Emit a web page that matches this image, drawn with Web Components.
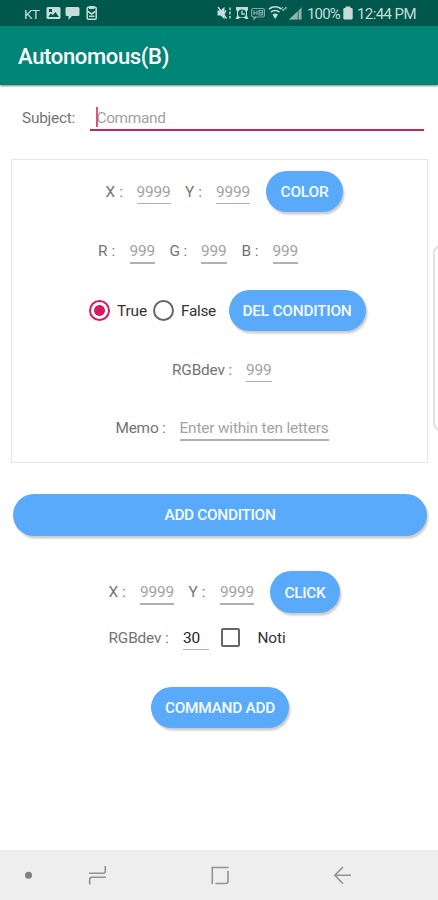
<!DOCTYPE html>
<html lang="en"><head><meta charset="utf-8"><title>Autonomous(B)</title>
<style>
html,body{margin:0;height:100%;background:#fff}
body{font-family:Roboto,"Liberation Sans",sans-serif;width:438px;height:900px;overflow:hidden}
</style></head><body>
<app-screen></app-screen>
<script>
const define = (name, html, ready) => {
  const t = document.createElement('template');
  t.innerHTML = html;
  customElements.define(name, class extends HTMLElement {
    connectedCallback() {
      if (this.shadowRoot) return;
      this.attachShadow({mode: 'open'}).append(t.content.cloneNode(true));
      for (const [a, p] of [['w', 'width'], ['ml', 'margin-left'], ['h', 'height'], ['size', 'font-size'], ['pl', 'padding-left']])
        if (this.hasAttribute(a)) this.style.setProperty(p, this.getAttribute(a) + 'px');
      if (ready) ready(this, this.shadowRoot);
    }
  });
};
// Spaces the letters so that the text fills the requested width.
const track = (span, width) => {
  const n = span.textContent.length, natural = span.getBoundingClientRect().width;
  span.style.letterSpacing = ((width - natural) / n).toFixed(3) + 'px';
};

define('text-label', `<style>
:host{display:block;flex:none;font-size:15.4px;line-height:20px;color:var(--ink,#747474);white-space:nowrap}
span{display:inline-block;white-space:pre}</style><span></span>`, (el, r) => {
  const s = r.querySelector('span'); s.textContent = el.getAttribute('text'); track(s, +el.getAttribute('w'));
});
define('text-field', `<style>
:host{display:flex;flex-direction:column;justify-content:center;position:relative;flex:none;height:100%;--ink:#a2a2a2}
:host([filled]){--ink:#222}
i{position:absolute;left:0;right:0;top:calc(50% + var(--drop,11px));height:var(--rule,1.5px);background:#b0b0b0}
</style><i></i>`, (el, r) => {
  const n = document.createElement('text-label');
  n.setAttribute('text', el.getAttribute('text'));
  n.setAttribute('w', el.getAttribute('tw') || el.getAttribute('w'));
  r.insertBefore(n, r.querySelector('i'));
});
define('form-row', `<style>
:host{display:flex;align-items:center;box-sizing:border-box}
</style><slot></slot>`);
define('pill-button', `<style>
:host{display:flex;align-items:center;justify-content:center;flex:none;height:41.5px;border-radius:21px;background:#59aafa;box-shadow:1.5px 2.5px 2px rgba(0,0,0,.2);--ink:#f7fbff;font-weight:500}
::slotted(*){position:relative;top:.6px}
</style><slot></slot>`);
define('radio-dot', `<style>
:host{display:block;flex:none;box-sizing:border-box;width:21px;height:21px;border:2px solid #666;border-radius:50%}
:host([checked]){border-color:#d81b60;background:radial-gradient(circle,#d81b60 5px,#fff 5.8px)}
</style>`);
define('check-square', `<style>
:host{display:block;flex:none;box-sizing:border-box;width:19px;height:19px;border:2px solid #666;border-radius:2px}
</style>`);
define('status-bar', `<style>
:host{display:flex;align-items:center;height:26px;background:#00574b;box-sizing:border-box;padding-left:24px;--ink:#c5dcd8}
svg{display:block;height:26px;flex:none}text-label{padding-top:2px}
</style>
<text-label size="13.5" w="15" text="KT"></text-label>
<svg width="178" height="26" viewBox="39 0 178 26" fill="#c5dcd8">
<path fill-rule="evenodd" d="M48 7h11q1.500 0 1.500 1.500v9q0 1.500-1.500 1.500H48q-1.500 0-1.500-1.500v-9Q46.500 7 48 7zm.4 10h10.500l-3.500-5-2.700 3.300-1.800-2zM49 9v3h3V9z"/>
<path d="M67 7h11q1.500 0 1.500 1.500v6q0 1.500-1.500 1.500h-6l-3.500 4V16H67q-1.500 0-1.500-1.500v-6Q65.500 7 67 7z"/>
<rect x="87.200" y="7.200" width="9" height="12" rx="1" fill="none" stroke="#c5dcd8" stroke-width="1.500"/><path d="M89 6h5.500v3H89zM88 10.500l3.700 2.500 3.700-2.500v2L91.700 15 88 12.500zM89 15.500h5.500V17H89z"/></svg>
<svg width="90" height="26" viewBox="217 0 90 26" fill="#c5dcd8">
<path d="M217.500 10.500h3l4-3.800v12.600l-4-3.800h-3z"/><path d="M218 7l8.500 11.500M226 10.500l-3 4.500M230 7.500v2.500m0 1.500v3m0 1.500v2.500" stroke="#c5dcd8" stroke-width="1.400"/>
<path fill-rule="evenodd" d="M236 7h12v3l-1 1v5l1.500 3h-3l-1-1h-5l-1 1h-3l1.500-3v-5l-1-1zM242 9.500a4 4 0 100 8 4 4 0 000-8z"/><path d="M242 10.500V14h2.800" stroke="#c5dcd8" stroke-width="1.300" fill="none"/>
<g fill="none" stroke="#82aaa4" stroke-width="1.200"><rect x="251.600" y="8.500" width="12.800" height="8.500" rx="1.500"/><path d="M254 10.500v4.500m0-2.200h3m0-2.300v4.500M259 10.500h3.500v4.300H259zm0 2.200h3.500M254 17v2l2-2"/></g>
<path d="M269 9q6-4.500 12.500 0M271 12q4-3 8.500 0" fill="none" stroke="#c5dcd8" stroke-width="1.700"/><path d="M272.500 14.500q3-2 5.500 0L275.200 19z"/><path d="M281 9l2-2m0 4l3-4m-3 4V8.500m3-1.500v2.500" stroke="#a5c5c0" stroke-width="1"/>
<path d="M289 19.500L302 7v12.500z" fill="#52877f"/><path d="M289 19.500l8.500-8v8zM299 10.500l2-2v11h-2z" fill="#91b3ae"/></svg>
<text-label size="15" w="33" text="100%"></text-label>
<svg width="16" height="26" viewBox="340 0 16 26" fill="#c5dcd8"><path d="M345.500 6.500h5V8h1q1.200 0 1.200 1.200v9q0 1.300-1.200 1.300h-7q-1.200 0-1.200-1.300v-9Q343.300 8 344.500 8h1z"/></svg>
<text-label size="15" w="59" ml="1" text="12:44 PM"></text-label>`);
define('app-bar', `<style>
:host{display:flex;align-items:center;height:59px;box-sizing:border-box;padding:3px 0 0 18px;background:#008577;box-shadow:0 1px 2px rgba(0,0,0,.5);font-weight:500;--ink:#fff}
text-label{line-height:28px}
</style><text-label size="22" w="151" text="Autonomous(B)"></text-label>`);
define('condition-card', `<style>
:host{display:block;box-sizing:border-box;width:417px;height:304px;margin:28px 0 0 11px;border:1.5px solid #e5e5e5;padding-top:2px}
</style><slot></slot>`);
define('edge-handle', `<style>
:host{position:absolute;left:433px;top:245px;width:5px;height:185px}svg{display:block}
</style><svg width="5" height="186" fill="none" stroke="#dcdcdc" stroke-width="1.600"><path d="M5 1L1 6v174l4 5"/></svg>`);
define('nav-bar', `<style>
:host{display:block;height:50px;background:#eee;margin-top:auto}svg{display:block}
</style><svg width="438" height="50" fill="none" stroke="#929292" stroke-width="1.600"><circle cx="28.500" cy="25.200" r="3.500" fill="#808080" stroke="none"/>
<path d="M89 23.200h14q2.300 0 2.300-2.300V16M106 27.200H92q-2.300 0-2.300 2.300v5"/>
<path d="M228.500 17.500h-16.200V34M215.500 33.500h10q2.500 0 2.500-2.500V21"/>
<path d="M335 25.200h16M343 17l-8.200 8.200 8.200 8.600"/></svg>`);
define('cursor-field', `<style>
:host{display:block;position:relative;width:334px;height:66px;margin-left:15px;box-sizing:border-box;--ink:#a2a2a2}
form-row{height:66px}
i{position:absolute;left:6px;top:22px;width:2px;height:20px;background:#dc5580}
b{position:absolute;left:0;width:100%;top:44px;height:2px;background:#c5265f}
</style><form-row><text-label ml="6.500" w="69" text="Command"></text-label></form-row><i></i><b></b>`);
define('app-screen', `<style>
:host{display:flex;flex-direction:column;width:438px;height:900px;position:relative}
.subject{height:46px;padding-top:20px}
.dark{--ink:#333}
.memo{--drop:11px;--rule:2px}
.add{margin:31px 0 0 13px}
.send{margin:26px 0 0 151px}
</style>
<status-bar></status-bar><app-bar></app-bar>
<form-row class="subject" pl="22"><text-label w="53" text="Subject:"></text-label><cursor-field></cursor-field></form-row>
<condition-card>
<form-row h="59" pl="93.500"><text-label w="17.500" text="X :"></text-label><text-field ml="13.500" w="34" text="9999"></text-field><text-label ml="14.500" w="17" text="Y :"></text-label><text-field ml="14" w="34" text="9999"></text-field><pill-button ml="16" w="77"><text-label w="48" text="COLOR"></text-label></pill-button></form-row>
<form-row h="60" pl="86"><text-label w="17.500" text="R :"></text-label><text-field ml="14" w="25.500" text="999"></text-field><text-label ml="14.500" w="17.500" text="G :"></text-label><text-field ml="14" w="25.500" text="999"></text-field><text-label ml="15" w="17" text="B :"></text-label><text-field ml="14" w="25.500" text="999"></text-field></form-row>
<form-row h="59" pl="77"><radio-dot checked></radio-dot><text-label class="dark" ml="7" w="30" text="True"></text-label><radio-dot ml="6"></radio-dot><text-label class="dark" ml="7" w="35" text="False"></text-label><pill-button ml="12.500" w="137"><text-label w="109" text="DEL CONDITION"></text-label></pill-button></form-row>
<form-row h="59" pl="160"><text-label w="60" text="RGBdev :"></text-label><text-field ml="14" w="25.500" text="999"></text-field></form-row>
<form-row h="58" pl="103.500"><text-label w="50" text="Memo :"></text-label><text-field class="memo" ml="14" w="149" text="Enter within ten letters"></text-field></form-row>
</condition-card>
<pill-button class="add" w="414"><text-label w="111" text="ADD CONDITION"></text-label></pill-button>
<form-row h="45" pl="108.500" style="margin-top:34px"><text-label w="17.500" text="X :"></text-label><text-field ml="14" w="34" text="9999"></text-field><text-label ml="14.500" w="17" text="Y :"></text-label><text-field ml="14.500" w="34" text="9999"></text-field><pill-button ml="16" w="70"><text-label w="41" text="CLICK"></text-label></pill-button></form-row>
<form-row h="46" pl="108.500"><text-label w="60" text="RGBdev :"></text-label><text-field filled ml="14.500" w="25.500" tw="17" text="30"></text-field><check-square ml="12"></check-square><text-label class="dark" ml="18" w="28" text="Noti"></text-label></form-row>
<pill-button class="send" w="138"><text-label w="110" text="COMMAND ADD"></text-label></pill-button>
<edge-handle></edge-handle>
<nav-bar></nav-bar>`);
</script>
</body></html>
